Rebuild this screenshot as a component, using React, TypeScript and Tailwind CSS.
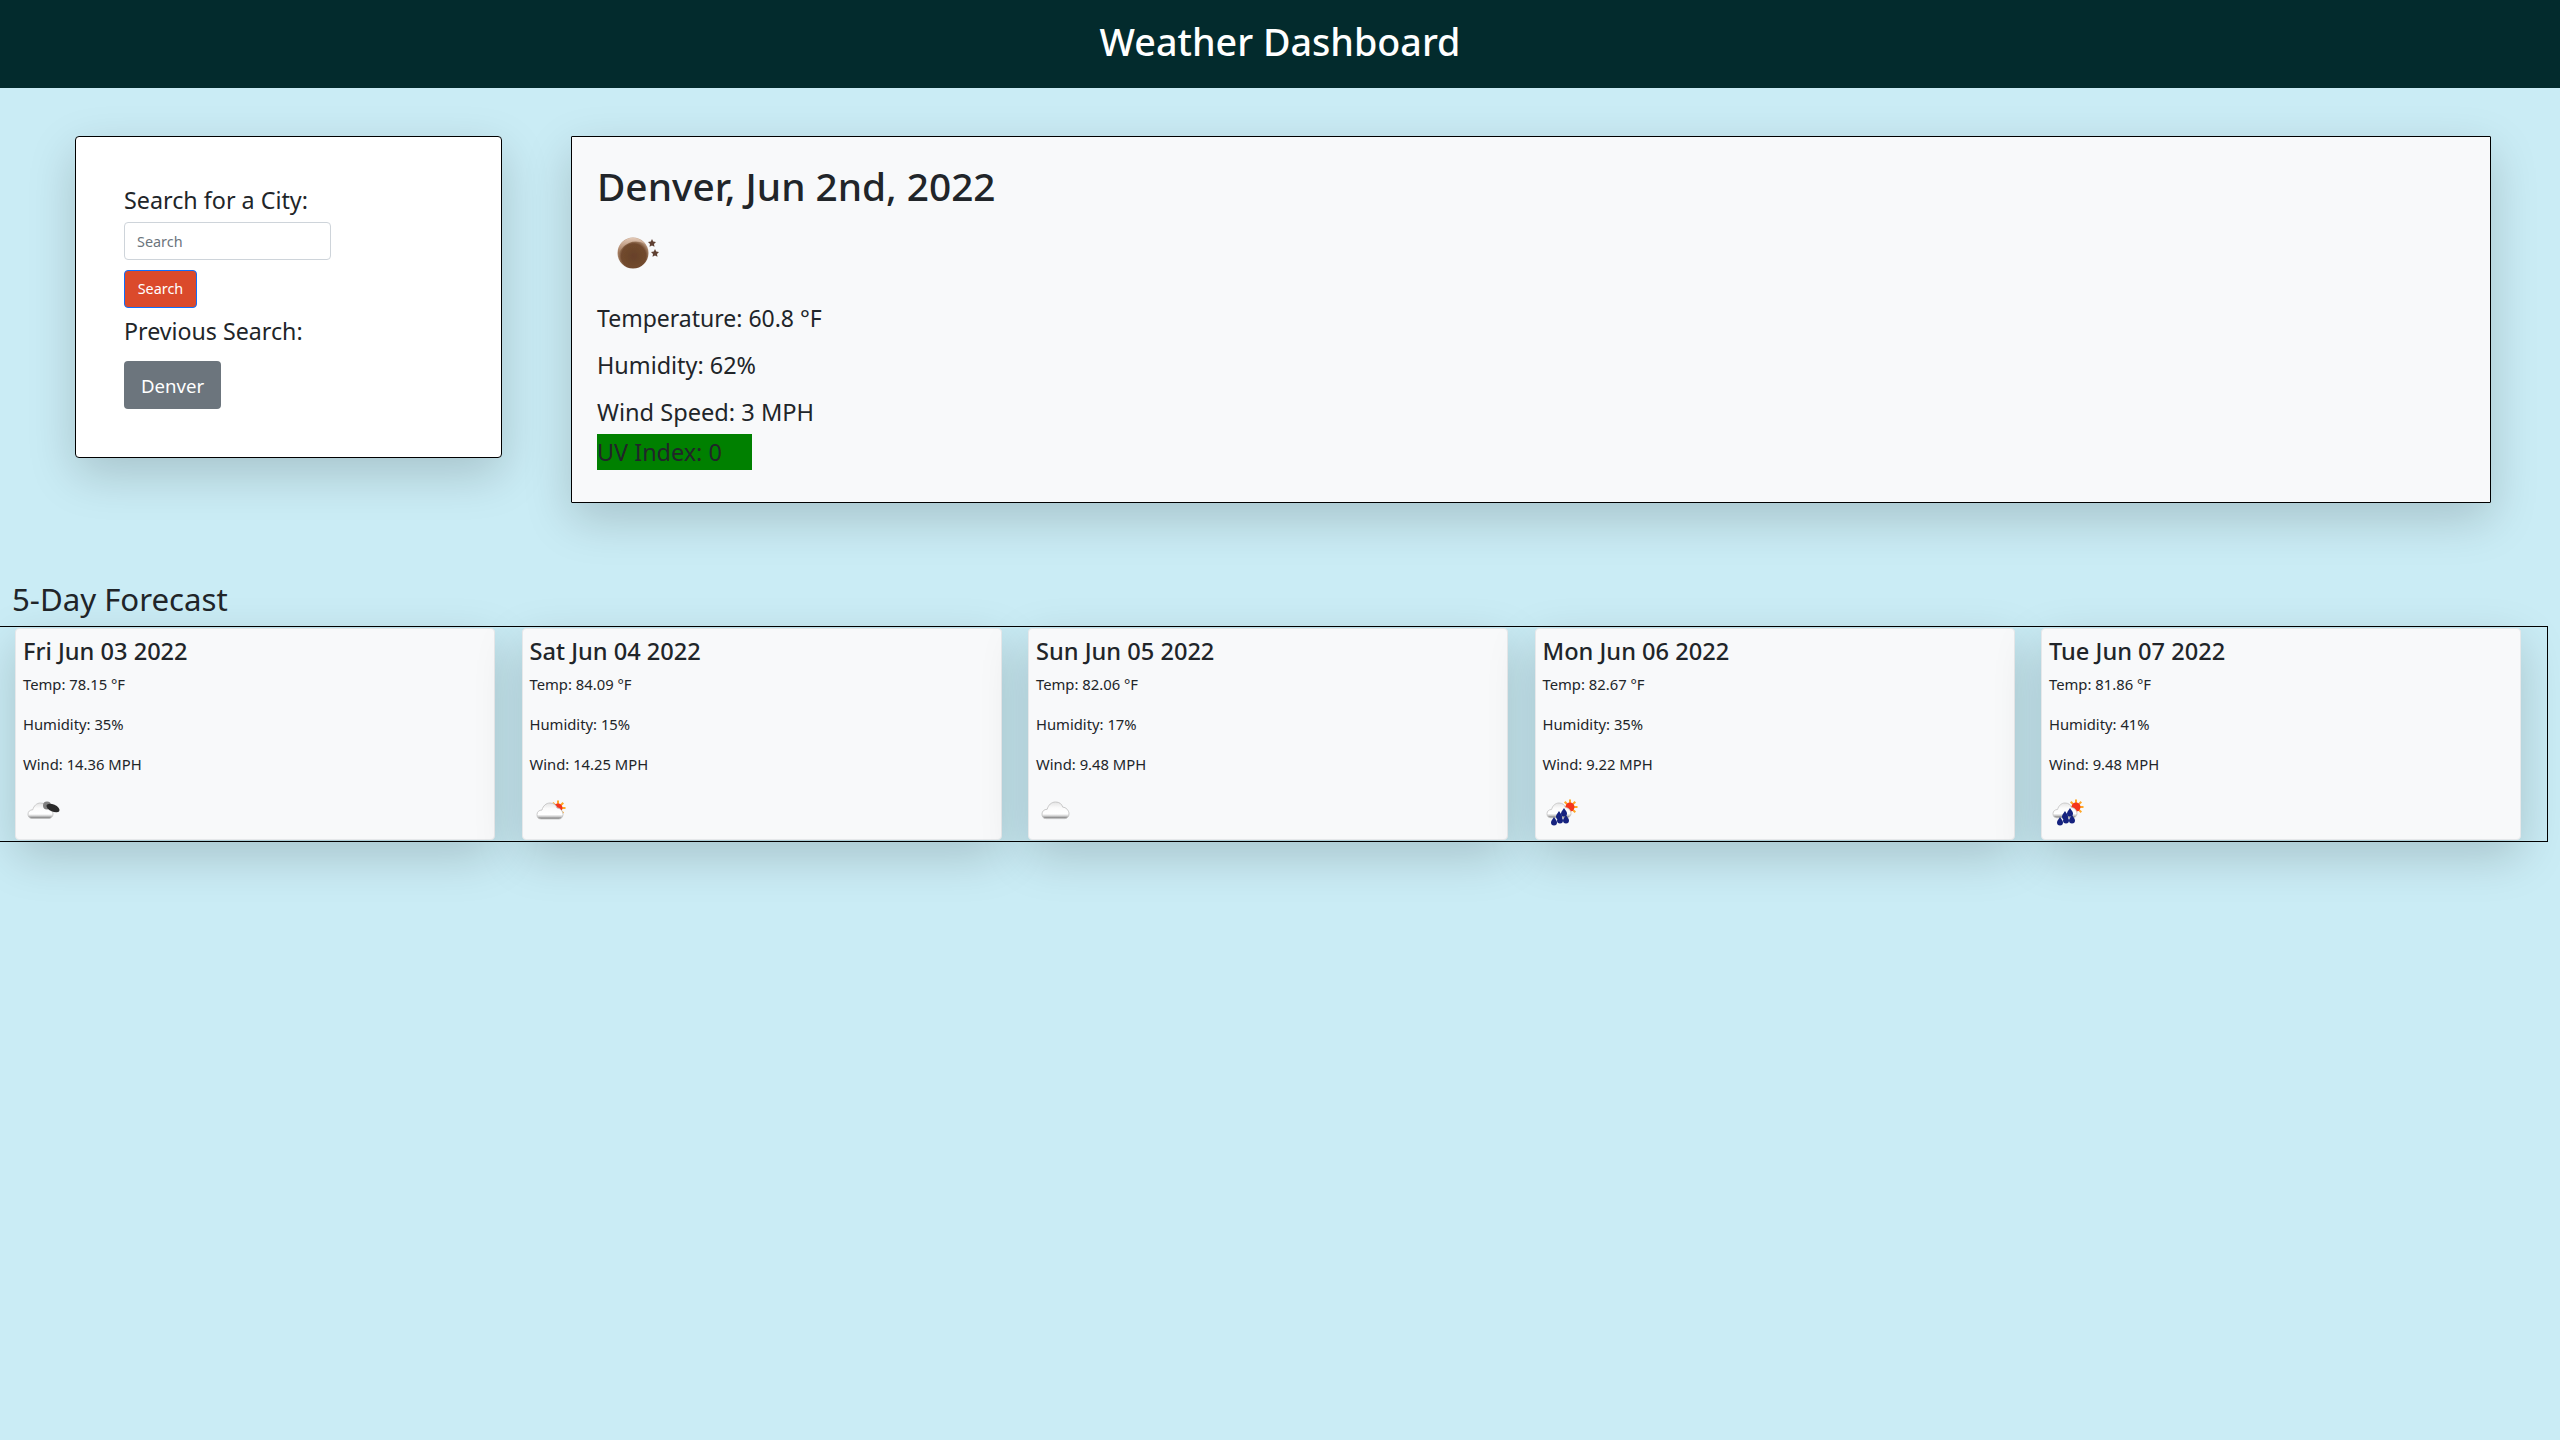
const font = { fontFamily: '"Noto Sans", "Liberation Sans", sans-serif' };

function Cloud({ x, y, w = 26 }: { x: number; y: number; w?: number }) {
  const s = w / 26;
  return (
    <path
      transform={`translate(${x} ${y}) scale(${s})`}
      d="M4 16C1 16 0 14 0 11.500 0 9 2 7 5 7 6 3 9 0 13 0c4 0 6 2 7 5 3 0 6 3 6 6.500 0 2.500-2 4.500-4 4.500z"
      fill="url(#cloudG)"
      stroke="#c4c4c4"
      strokeWidth="0.9"
    />
  );
}

function Defs() {
  return (
    <svg width="0" height="0" className="absolute">
      <defs>
        <linearGradient id="cloudG" x1="0" y1="0" x2="0" y2="1">
          <stop offset="0" stopColor="#e4e4e4" />
          <stop offset="0.35" stopColor="#fbfbfb" />
          <stop offset="0.72" stopColor="#ffffff" />
          <stop offset="0.84" stopColor="#d0d0d0" />
          <stop offset="1" stopColor="#6a6a6a" />
        </linearGradient>
        <radialGradient id="ballG" cx="0.52" cy="0.6" r="0.55">
          <stop offset="0" stopColor="#68412a" />
          <stop offset="0.72" stopColor="#714a2d" />
          <stop offset="1" stopColor="#c0a088" />
        </radialGradient>
        <linearGradient id="ballTop" x1="0" y1="0" x2="0" y2="1">
          <stop offset="0" stopColor="#e3c9b6" />
          <stop offset="1" stopColor="#96694a" />
        </linearGradient>
        <filter id="soft"><feGaussianBlur stdDeviation="0.5" /></filter>
      </defs>
    </svg>
  );
}

function Sun({ x, y }: { x: number; y: number }) {
  const rays = [0, 45, 90, 135, 180, 225, 270, 315];
  return (
    <g transform={`translate(${x} ${y})`}>
      {rays.map((r) => (
        <rect key={r} x="-1" y="-7.500" width="2" height="4" fill="#ffa726" transform={`rotate(${r})`} />
      ))}
      <circle r="4.500" fill="#f4361e" />
    </g>
  );
}

function Drop({ x, y }: { x: number; y: number }) {
  return <path d={`M${x} ${y - 3}c2 3 3 4 3 5.500a3 3 0 0 1-6 0c0-1.500 1-2.500 3-5.500z`} fill="#13237f" />;
}

function WeatherIcon({ kind }: { kind: string }) {
  return (
    <svg width="60" height="40" viewBox="0 0 60 40" filter="url(#soft)" aria-hidden="true" className="-ml-[3px] block">
      {kind === "dark" && (
        <>
          <Cloud x={8} y={13} w={25} />
          <circle cx="27" cy="15.500" r="4" fill="#808080" />
          <ellipse cx="33" cy="18" rx="7" ry="3.500" fill="#2b2b2b" transform="rotate(25 33 18)" />
        </>
      )}
      {kind === "sun" && (
        <>
          <Sun x={31} y={18} />
          <Cloud x={10} y={13} />
        </>
      )}
      {kind === "cloud" && <Cloud x={9} y={12} w={27} />}
      {kind === "rain" && (
        <>
          <Sun x={30} y={17} />
          <Cloud x={7} y={13} w={24} />
          <Drop x={19} y={24} />
          <Drop x={24} y={21} />
          <Drop x={14} y={30} />
          <Drop x={20} y={28} />
          <Drop x={26} y={28} />
        </>
      )}
    </svg>
  );
}

const days = [
  { d: "Fri Jun 03 2022", t: "78.15", h: "35", w: "14.36", i: "dark" },
  { d: "Sat Jun 04 2022", t: "84.09", h: "15", w: "14.25", i: "sun" },
  { d: "Sun Jun 05 2022", t: "82.06", h: "17", w: "9.48", i: "cloud" },
  { d: "Mon Jun 06 2022", t: "82.67", h: "35", w: "9.22", i: "rain" },
  { d: "Tue Jun 07 2022", t: "81.86", h: "41", w: "9.48", i: "rain" },
];

const cardShadow = "shadow-[0_16px_48px_rgba(0,0,0,0.175)]";

export default function App() {
  return (
    <div style={font} className="min-h-[1440px] overflow-hidden bg-[#caecf5] text-[#212529]">
      <Defs />
      <header className="flex h-[88px] items-center justify-center bg-[#032b2d] pb-[4px]">
        <h1 className="text-[37.7px] font-medium leading-none text-white">Weather Dashboard</h1>
      </header>

      <main className="flex items-start pt-12 pl-[75px]">
        <section className={`h-[322px] w-[427px] rounded border border-black bg-white pl-[48px] pt-[48px] ${cardShadow}`}>
          <label className="block text-[23.3px] leading-[30px]">Search for a City:</label>
          <input
            placeholder="Search"
            className="mt-[7px] block h-[38px] w-[207px] rounded border border-[#ced4da] bg-white px-3 text-[14.4px] outline-none placeholder:text-[#6c757d]"
          />
          <button className="mt-[10px] block h-[38px] w-[73px] rounded border border-[#0d6efd] bg-[#db4a2b] text-[14.4px] text-white">
            Search
          </button>
          <h2 className="mt-[8px] text-[23.2px] font-normal leading-[30px]">Previous Search:</h2>
          <button className="mt-[15px] block h-[48px] w-[97px] rounded bg-[#6c757d] pt-[2px] text-[18.6px] text-white">Denver</button>
        </section>

        <section className={`ml-[69px] h-[367px] w-[1920px] rounded-[1px] border border-black bg-[#f8f9fa] pl-[25px] pt-[25px] ${cardShadow}`}>
          <h2 className="text-[38.8px] font-medium leading-[48px]">Denver, Jun 2nd, 2022</h2>
          <div className="mt-[18px] h-[50px] pl-[14px]">
            <svg width="50" height="50" viewBox="0 0 50 50" filter="url(#soft)" aria-hidden="true" className="block">
              <circle cx="22" cy="25" r="15.500" fill="url(#ballG)" />
              <path d="M7 27a15 15 0 0 1 27-11c-6-3-11-3-16-1-5 2-9 7-11 12z" fill="url(#ballTop)" />
              <path d="M41 11l1.200 2.500 2.800.5-2 2 .5 2.800-2.500-1.300-2.500 1.300.5-2.800-2-2 2.800-.5z" fill="#5e4030" />
              <path d="M44 21l1.200 2.500 2.800.5-2 2 .5 2.800-2.500-1.300-2.500 1.300.5-2.800-2-2 2.800-.5z" fill="#5e4030" />
            </svg>
          </div>
          <p className="mt-[25px] text-[23px] leading-[31px]">Temperature: 60.8 °F</p>
          <p className="mt-[16px] text-[23.4px] leading-[31px]">Humidity: 62%</p>
          <p className="mt-[16px] text-[23.6px] leading-[31px]">Wind Speed: 3 MPH</p>
          <div className="mt-[6px] h-[36px] w-[155px] bg-[#008000] text-[23.4px] leading-[36px]">UV Index: 0</div>
        </section>
      </main>

      <h2 className="mt-[70px] pl-3 text-[31.2px] font-normal leading-[53px]">5-Day Forecast</h2>
      <section className="-ml-px flex h-[216px] w-[2549px] gap-[26.5px] border border-black pl-[15px] pt-[1px]">
        {days.map((x) => (
          <article key={x.d} className={`h-[212px] w-[480px] rounded border border-[#e6e8ea] bg-[#f8f9fa] pl-[7px] ${cardShadow}`}>
            <h3 className="mt-[7px] text-[23.6px] font-medium leading-[30px]">{x.d}</h3>
            <p className="mt-[6px] text-[14.8px] leading-[24px]">Temp: {x.t} °F</p>
            <p className="mt-[16px] text-[14.8px] leading-[24px]">Humidity: {x.h}%</p>
            <p className="mt-[16px] text-[14.8px] leading-[24px]">Wind: {x.w} MPH</p>
            <div className="mt-[14px]">
              <WeatherIcon kind={x.i} />
            </div>
          </article>
        ))}
      </section>
    </div>
  );
}
